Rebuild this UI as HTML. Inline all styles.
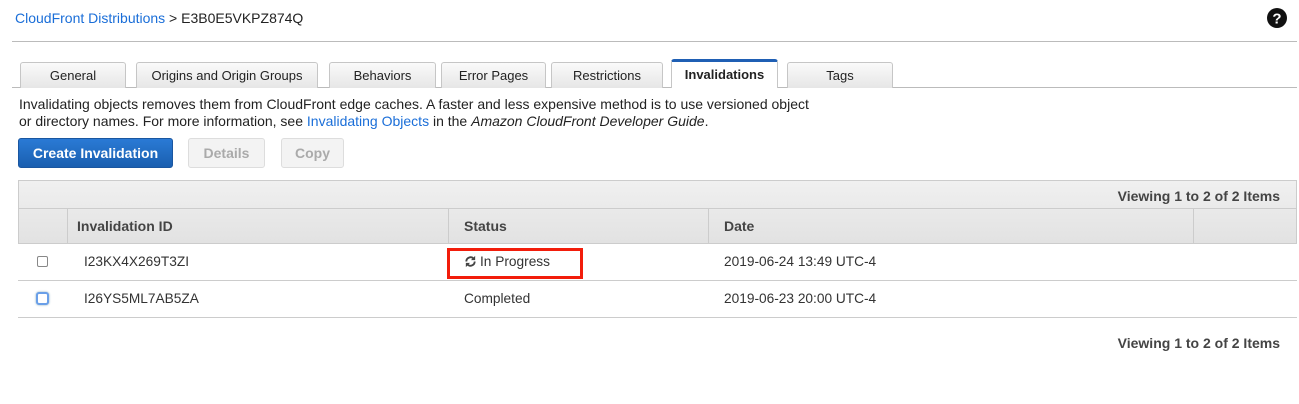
<!DOCTYPE html>
<html><head><style>
*{box-sizing:border-box;margin:0;padding:0}
body{width:1299px;height:404px;background:#fff;font-family:"Liberation Sans",Arial,sans-serif;color:#222;font-size:13px;position:relative;overflow:hidden}
.a{position:absolute}
.tab{position:absolute;top:62px;height:26px;border:1px solid #c6c6c6;border-bottom:none;border-radius:3px 3px 0 0;background:linear-gradient(#fafafa,#e6e6e6);text-align:center;font-size:13px;line-height:25px;color:#222}
.btn{position:absolute;top:138px;height:30px;border-radius:3px;font-size:14px;font-weight:bold;line-height:28px;text-align:center}
.dis{border:1px solid #ddd;background:#f3f3f3;color:#aaa}
.th{position:absolute;top:209px;height:34px;line-height:34px;font-weight:bold;font-size:14px;color:#444;padding-left:9px;border-left:1px solid #ccc}
.td{position:absolute;font-size:13.7px;color:#333}
.cb{position:absolute;width:11px;height:11px;border:1px solid #888;border-radius:2px;background:#fff}
</style></head><body>
<div class="a" style="left:15px;top:10px;font-size:14px"><span style="color:#1a6ed8">CloudFront Distributions</span> &gt; E3B0E5VKPZ874Q</div>
<svg class="a" style="left:1267px;top:8px" width="20" height="20" viewBox="0 0 20 20"><circle cx="10" cy="10" r="10" fill="#111"/><text x="10" y="15.5" text-anchor="middle" font-family="Liberation Sans" font-weight="bold" font-size="15" fill="#fff">?</text></svg>
<div class="a" style="left:12px;top:41px;width:1285px;height:1px;background:#bbb"></div>
<div class="a" style="left:12px;top:87px;width:1285px;height:1px;background:#bbb"></div>
<div class="tab" style="left:20px;width:106px">General</div>
<div class="tab" style="left:136px;width:182px">Origins and Origin Groups</div>
<div class="tab" style="left:329px;width:107px">Behaviors</div>
<div class="tab" style="left:441px;width:105px">Error Pages</div>
<div class="tab" style="left:551px;width:112px">Restrictions</div>
<div class="tab" style="left:671px;top:59px;height:29px;width:107px;background:#fff;border-top:3px solid #1f5fb4;font-weight:bold;line-height:26px">Invalidations</div>
<div class="tab" style="left:787px;width:106px">Tags</div>
<div class="a" style="left:19px;top:96px;font-size:14px;line-height:17px;color:#222;white-space:nowrap">Invalidating objects removes them from CloudFront edge caches. A faster and less expensive method is to use versioned object<br>or directory names. For more information, see <span style="color:#1a6ed8">Invalidating Objects</span> in the <i>Amazon CloudFront Developer Guide</i>.</div>
<div class="btn" style="left:18px;width:155px;background:linear-gradient(#2a7ad5,#1a5fb0);border:1px solid #1a56a0;color:#fff">Create Invalidation</div>
<div class="btn dis" style="left:188px;width:77px">Details</div>
<div class="btn dis" style="left:281px;width:63px">Copy</div>
<div class="a" style="left:18px;top:180px;width:1279px;height:64px;background:linear-gradient(#f0f0f0,#e2e2e2);border:1px solid #ccc"></div>
<div class="a" style="left:18px;top:208px;width:1279px;height:1px;background:#ccc"></div>
<div class="a" style="right:19px;top:188px;font-weight:bold;font-size:14px;color:#444">Viewing 1 to 2 of 2 Items</div>
<div class="th" style="left:67px;width:381px">Invalidation ID</div>
<div class="th" style="left:448px;width:260px;padding-left:15px">Status</div>
<div class="th" style="left:708px;width:485px;padding-left:15px">Date</div>
<div class="th" style="left:1193px;width:104px"></div>
<div class="a" style="left:18px;top:280px;width:1279px;height:1px;background:#ccc"></div>
<div class="a" style="left:18px;top:317px;width:1279px;height:1px;background:#ccc"></div>
<div class="cb" style="left:37px;top:256px"></div>
<div class="cb" style="left:36px;top:292px;width:13px;height:13px;border:2px solid #6a9fe8;border-radius:3px;box-shadow:0 0 2px #8ab"></div>
<div class="td" style="left:84px;top:254px">I23KX4X269T3ZI</div>
<div class="td" style="left:84px;top:291px">I26YS5ML7AB5ZA</div>
<div class="a" style="left:447px;top:248px;width:136px;height:31px;border:3px solid #f21d0b"></div>
<svg class="a" style="left:464px;top:255px" width="13" height="13" viewBox="0 0 14 14"><path d="M2.5 7a4.5 4.5 0 0 1 7.8-3.1" fill="none" stroke="#444" stroke-width="2"/><path d="M12 1v4.5H7.5z" fill="#444"/><path d="M11.5 7a4.5 4.5 0 0 1-7.8 3.1" fill="none" stroke="#444" stroke-width="2"/><path d="M2 13V8.5h4.5z" fill="#444"/></svg>
<div class="td" style="left:480px;top:254px">In Progress</div>
<div class="td" style="left:464px;top:291px">Completed</div>
<div class="td" style="left:724px;top:254px">2019-06-24 13:49 UTC-4</div>
<div class="td" style="left:724px;top:291px">2019-06-23 20:00 UTC-4</div>
<div class="a" style="right:19px;top:335px;font-weight:bold;font-size:14px;color:#444">Viewing 1 to 2 of 2 Items</div>
</body></html>
